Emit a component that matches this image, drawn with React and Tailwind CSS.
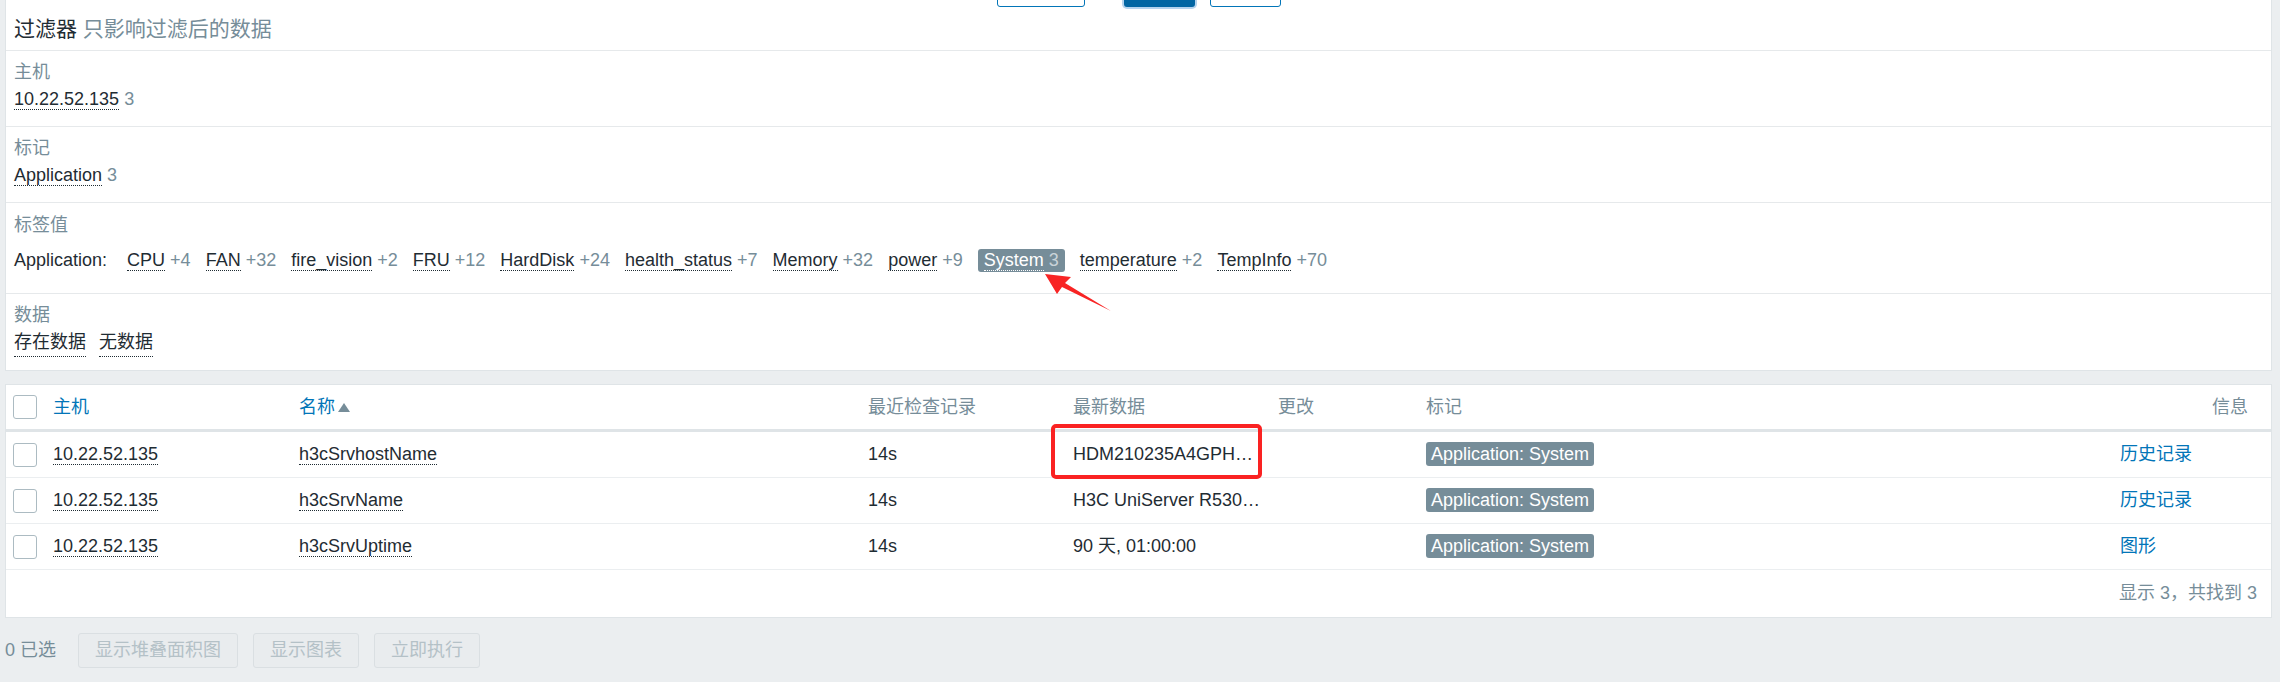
import React from "react";

const tags = [
  ["CPU", "+4"],
  ["FAN", "+32"],
  ["fire_vision", "+2"],
  ["FRU", "+12"],
  ["HardDisk", "+24"],
  ["health_status", "+7"],
  ["Memory", "+32"],
  ["power", "+9"],
  ["System", "3", true],
  ["temperature", "+2"],
  ["TempInfo", "+70"],
];

const rows = [
  { host: "10.22.52.135", name: "h3cSrvhostName", last: "14s", data: "HDM210235A4GPH…", info: "历史记录" },
  { host: "10.22.52.135", name: "h3cSrvName", last: "14s", data: "H3C UniServer R530…", info: "历史记录" },
  { host: "10.22.52.135", name: "h3cSrvUptime", last: "14s", data: "90 天, 01:00:00", info: "图形" },
];

function Dotted({ children }) {
  return <span className="border-b border-dotted border-[#1f2c33]">{children}</span>;
}

function Checkbox() {
  return <span className="block w-[24px] h-[24px] rounded-[3px] border border-[#acbbc2] bg-white"></span>;
}

function Section({ label, children, last }) {
  return (
    <div className={last ? "px-[8px] pt-[8px] pb-[13px]" : "px-[8px] pt-[8px] pb-[13px] border-b border-[#e6e9eb]"}>
      <div className="leading-[27px] text-[#768d99]">{label}</div>
      {children}
    </div>
  );
}

export default function App() {
  return (
    <div className="relative w-[2280px] h-[682px] overflow-hidden bg-[#ebeef0] text-[18px] text-[#1f2c33] font-['Liberation_Sans','Noto_Sans_CJK_SC',sans-serif]">
      {/* Filter panel */}
      <div className="ml-[5px] mr-[8px] bg-white border-x border-b border-[#dfe4e7]">
        <div className="border-b border-[#e6e9eb] pb-[8px]">
          <div className="flex justify-center -mt-[29px] h-[36px]">
            <button className="w-[88px] h-[36px] rounded-[3px] border border-[#0275b8] bg-white"></button>
            <button className="ml-[39px] w-[71px] h-[36px] rounded-[3px] bg-[#0266a3] ring-[2px] ring-[#b5d3ee]"></button>
            <button className="ml-[15px] w-[71px] h-[36px] rounded-[3px] border border-[#0275b8] bg-white"></button>
          </div>
          <div className="mt-[8px] px-[8px] leading-[27px] text-[21px]">
            过滤器 <span className="text-[#768d99]">只影响过滤后的数据</span>
          </div>
        </div>

        <Section label="主机">
          <div className="leading-[27px]">
            <Dotted>10.22.52.135</Dotted> <span className="text-[#768d99]">3</span>
          </div>
        </Section>

        <Section label="标记">
          <div className="leading-[27px]">
            <Dotted>Application</Dotted> <span className="text-[#768d99]">3</span>
          </div>
        </Section>

        <div className="px-[8px] pt-[9px] pb-[19px] border-b border-[#e6e9eb]">
          <div className="leading-[27px] text-[#768d99]">标签值</div>
          <div className="mt-[8px] flex items-center h-[27px] whitespace-nowrap">
            <span className="mr-[20px]">Application:</span>
            <div className="flex items-center gap-[15px]">
              {tags.map(([t, c, active]) =>
                active ? (
                  <span key={t} className="inline-block h-[23px] leading-[23px] px-[6px] rounded-[3px] bg-[#768d99] text-white">
                    <span className="border-b border-dotted border-white">{t}</span>{" "}
                    <span className="text-[#c9d3d8]">{c}</span>
                  </span>
                ) : (
                  <span key={t}>
                    <Dotted>{t}</Dotted> <span className="text-[#768d99]">{c}</span>
                  </span>
                )
              )}
            </div>
          </div>
        </div>

        <Section label="数据" last>
          <div className="leading-[27px] flex gap-[13px]">
            <Dotted>存在数据</Dotted>
            <Dotted>无数据</Dotted>
          </div>
        </Section>
      </div>

      {/* Table panel */}
      <div className="mt-[13px] ml-[5px] mr-[8px] bg-white border border-[#dfe4e7]">
        <div className="grid grid-cols-[39px_246px_569px_205px_205px_148px_694px_1fr] h-[47px] items-center border-b-[3px] border-[#dfe4e7] text-[#768d99]">
          <div className="pl-[7px]"><Checkbox /></div>
          <div className="px-[8px] text-[#0275b8]">主机</div>
          <div className="px-[8px] flex items-center">
            <span className="text-[#0275b8]">名称</span>
            <svg width="12" height="10" viewBox="0 0 12 10" className="ml-[3px] mt-[1px]">
              <polygon points="6,0 12,9 0,9" fill="#768d99" />
            </svg>
          </div>
          <div className="px-[8px]">最近检查记录</div>
          <div className="px-[8px]">最新数据</div>
          <div className="px-[8px]">更改</div>
          <div className="px-[8px]">标记</div>
          <div className="pl-[8px] pr-[23px] text-right">信息</div>
        </div>

        {rows.map((r, i) => (
          <div key={i} className="grid grid-cols-[39px_246px_569px_205px_205px_148px_694px_1fr] h-[46px] items-center border-b border-[#ebeef0]">
            <div className="pl-[7px]"><Checkbox /></div>
            <div className="px-[8px] leading-[27px]"><Dotted>{r.host}</Dotted></div>
            <div className="px-[8px] leading-[27px]"><Dotted>{r.name}</Dotted></div>
            <div className="px-[8px]">{r.last}</div>
            <div className="px-[8px] whitespace-nowrap">{r.data}</div>
            <div className="px-[8px]"></div>
            <div className="px-[8px]">
              <span className="inline-block h-[24px] leading-[24px] px-[5px] rounded-[3px] bg-[#768d99] text-white whitespace-nowrap">
                Application: System
              </span>
            </div>
            <div className="px-[8px] text-[#0275b8]">{r.info}</div>
          </div>
        ))}

        <div className="h-[47px] flex items-center justify-end pr-[14px] text-[#768d99]">显示 3，共找到 3</div>
      </div>

      {/* Bottom action bar */}
      <div className="mt-[15px] ml-[5px] flex items-center h-[35px]">
        <span className="text-[#768d99] mr-[22px]">0 已选</span>
        <div className="flex gap-[15px]">
          <button className="h-[35px] px-[16px] rounded-[3px] border border-[#dadfe2] bg-[#e9ecee] text-[#b4c1c7]">显示堆叠面积图</button>
          <button className="h-[35px] px-[16px] rounded-[3px] border border-[#dadfe2] bg-[#e9ecee] text-[#b4c1c7]">显示图表</button>
          <button className="h-[35px] px-[16px] rounded-[3px] border border-[#dadfe2] bg-[#e9ecee] text-[#b4c1c7]">立即执行</button>
        </div>
      </div>

      {/* Annotations */}
      <svg className="absolute left-[1040px] top-[268px]" width="80" height="50" viewBox="0 0 80 50">
        <polygon points="5,6 31,9 25,15 71,43 22,19 17,26" fill="#f82424" />
      </svg>
      <div className="absolute left-[1051px] top-[424px] w-[211px] h-[55px] border-[4px] border-[#fa2222] rounded-[5px]"></div>
    </div>
  );
}
